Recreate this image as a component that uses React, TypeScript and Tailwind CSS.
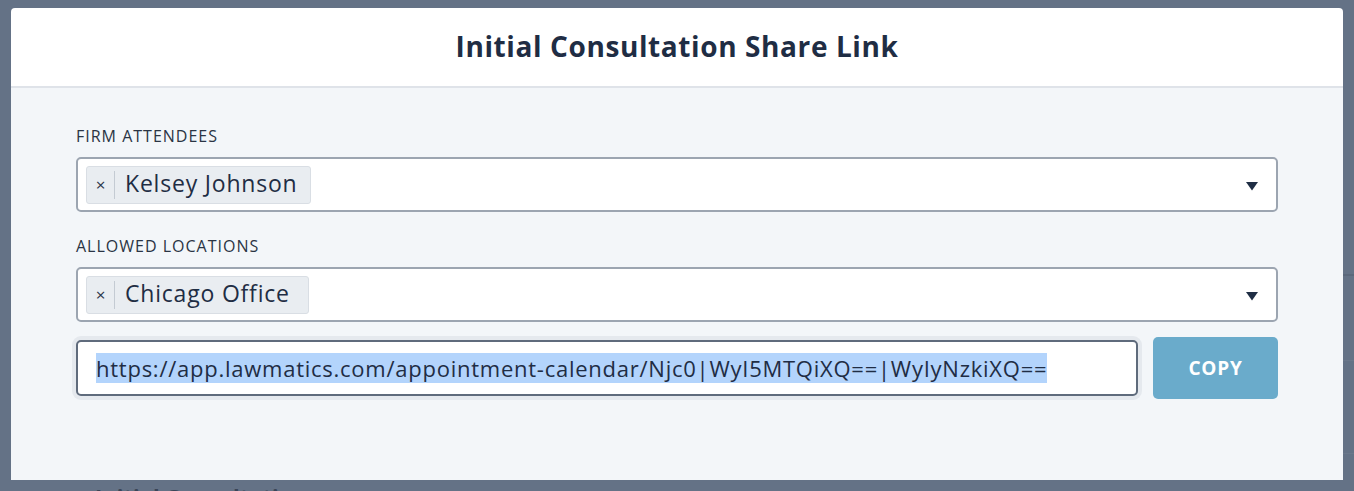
import React from "react";

const URL_TEXT =
  "https://app.lawmatics.com/appointment-calendar/Njc0|WyI5MTQiXQ==|WyIyNzkiXQ==";

function Tag({ label, width }: { label: string; width: string }) {
  return (
    <div
      className={`flex h-[38px] items-center rounded-[3px] border border-[#d9dee4] bg-[#e9edf1] ${width}`}
    >
      <span className="flex h-full w-[27px] items-center justify-center text-[17px] leading-none text-[#2a3548]">
        ×
      </span>
      <span className="h-[28px] w-px bg-[#c4cbd3]" />
      <span className="whitespace-nowrap pb-[2px] pl-[10px] pr-[10px] text-[23px] leading-none tracking-[0.8px] text-[#1f2d44]">
        {label}
      </span>
    </div>
  );
}

function SelectBox({ label, width }: { label: string; width: string }) {
  return (
    <div className="flex h-[55px] items-center justify-between rounded-[5px] border-2 border-[#9ca5b1] bg-white pl-[8px] pr-[18px]">
      <Tag label={label} width={width} />
      <svg width="12" height="9" viewBox="0 0 12 9" className="mt-[4px]">
        <path d="M0 0 L12 0 L6 8.5 Z" fill="#1f2d44" />
      </svg>
    </div>
  );
}

export default function App() {
  return (
    <div
      className="flex h-[491px] w-[1354px] flex-col overflow-hidden bg-[#647286]"
      style={{ fontFamily: "'Open Sans', 'Noto Sans', sans-serif" }}
    >
      <div className="ml-[21px] h-[2px] bg-[#566378]" />
      <div className="mt-[8px] flex">
        <div className="ml-[11px] flex h-[472px] w-[1332px] flex-col overflow-hidden rounded-t-[4px]">
          <div className="flex h-[80px] items-center justify-center border-b-2 border-[#dfe3e9] bg-white pb-[2px]">
            <h1 className="text-[28px] font-bold tracking-[0.6px] text-[#1f2d44]">
              Initial Consultation Share Link
            </h1>
          </div>
          <div className="flex flex-1 flex-col bg-[#f3f6f9] px-[65px] pt-[38px]">
            <div className="mb-[11px] h-[20px] text-[16px] leading-[20px] tracking-[1px] text-[#2a3444]">
              FIRM ATTENDEES
            </div>
            <SelectBox label="Kelsey Johnson" width="w-[225px]" />
            <div className="mb-[11px] mt-[24px] h-[20px] text-[16px] leading-[20px] tracking-[1px] text-[#2a3444]">
              ALLOWED LOCATIONS
            </div>
            <SelectBox label="Chicago Office" width="w-[223px]" />
            <div className="mt-[15px] flex h-[62px] items-center gap-[15px]">
              <div className="flex h-[56px] w-[1062px] items-center rounded-[5px] border-2 border-[#5f6b7c] bg-white pl-[18px] ring-4 ring-[#e5e9ee]">
                <span className="whitespace-nowrap bg-[#b3d4fc] text-[22px] leading-[30px] tracking-[0.75px] text-[#1f2d44]">
                  {URL_TEXT}
                </span>
              </div>
              <button className="flex h-[62px] flex-1 items-center justify-center rounded-[5px] bg-[#6aabcb] text-[19px] font-bold tracking-[0.8px] text-white">
                COPY
              </button>
            </div>
          </div>
        </div>
        <div className="flex flex-1 flex-col">
          <div className="mt-[266px] h-[2px] bg-[#5b687b]" />
          <div className="mt-[84px] h-px bg-[#6b788b]" />
          <div className="mt-[92px] h-px bg-[#6b788b]" />
        </div>
      </div>
      <div className="ml-[95px] mt-[4px] text-[22px] font-bold leading-[24px] text-[#3a4557]">
        Initial Consultation
      </div>
    </div>
  );
}
